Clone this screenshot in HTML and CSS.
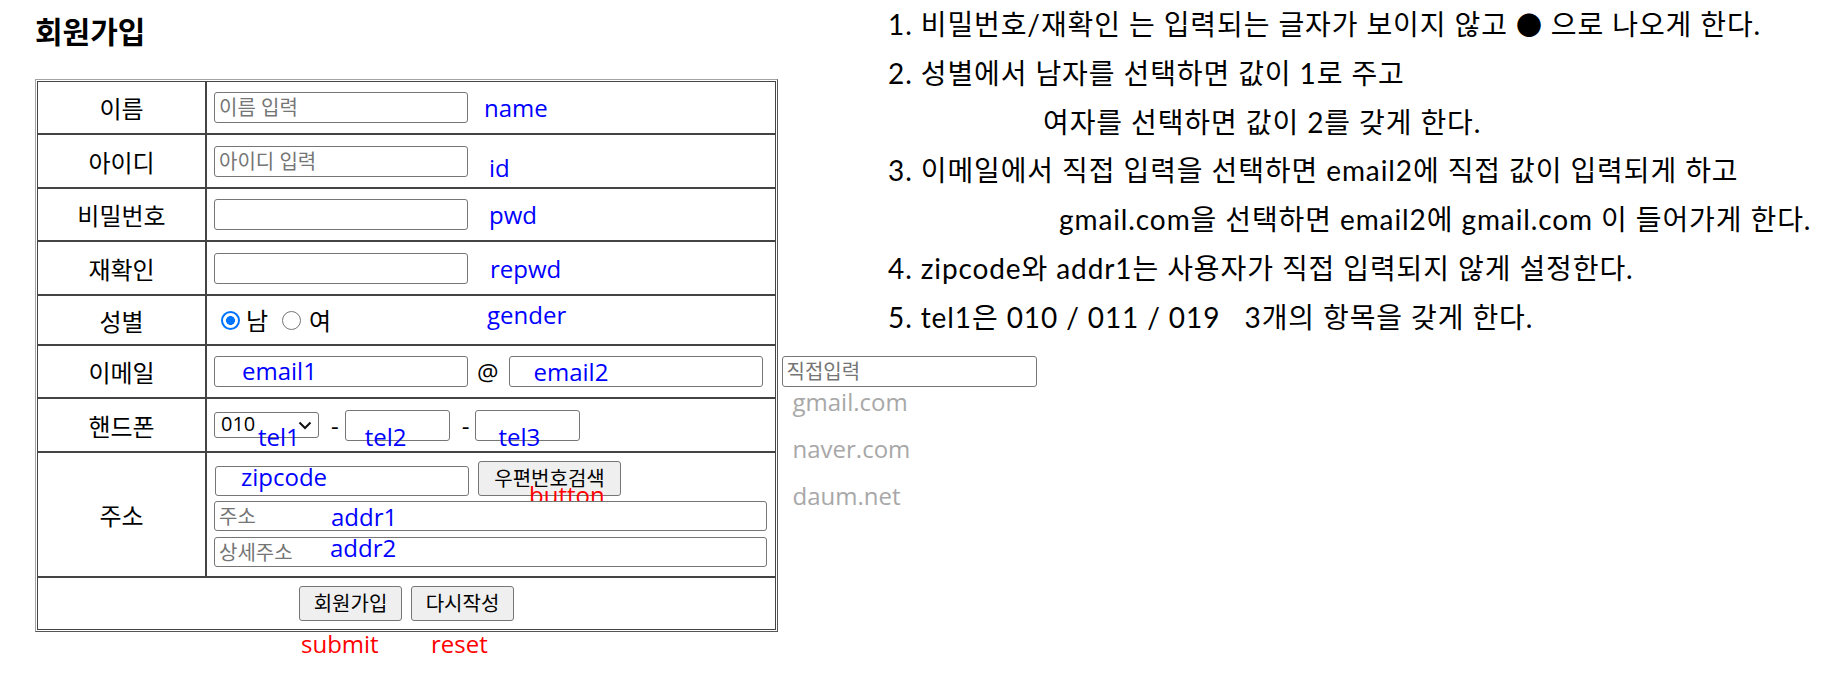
FILE: index.html
```html
<!DOCTYPE html>
<html lang="ko">
<head>
<meta charset="utf-8">
<title>회원가입</title>
<link rel="stylesheet" href="styles.css">
</head>
<body>
<div class="page">
  <section class="form-col">
    <h3 class="title">회원가입</h3>
    <table class="join">
      <tr>
        <td class="lab">이름</td>
        <td><div class="cell h51"><input class="txt" type="text" placeholder="이름 입력"><span class="note n-name">name</span></div></td>
      </tr>
      <tr>
        <td class="lab">아이디</td>
        <td><div class="cell h52"><input class="txt" type="text" placeholder="아이디 입력"><span class="note n-id">id</span></div></td>
      </tr>
      <tr>
        <td class="lab">비밀번호</td>
        <td><div class="cell h51"><input class="txt" type="password"><span class="note n-pwd">pwd</span></div></td>
      </tr>
      <tr>
        <td class="lab">재확인</td>
        <td><div class="cell h52"><input class="txt" type="password"><span class="note n-repwd">repwd</span></div></td>
      </tr>
      <tr>
        <td class="lab">성별</td>
        <td><div class="cell h48">
          <div class="gbox">
            <input class="radio r1" type="radio" name="gender" value="1" checked><span class="gl">남</span>
            <input class="radio r2" type="radio" name="gender" value="2"><span class="gl">여</span>
          </div>
          <span class="note n-gender">gender</span>
        </div></td>
      </tr>
      <tr>
        <td class="lab">이메일</td>
        <td><div class="cell h51">
          <span class="fld"><input class="txt" type="text"><span class="ov blue ov-email1">email1</span></span>
          <span class="at">@</span>
          <span class="fld"><input class="txt" type="text"><span class="ov blue ov-email2">email2</span></span>
          <span class="fld direct"><input class="txt w255" type="text" placeholder="직접입력">
            <span class="opts"><span class="opt">gmail.com</span><span class="opt">naver.com</span><span class="opt">daum.net</span></span>
          </span>
        </div></td>
      </tr>
      <tr>
        <td class="lab">핸드폰</td>
        <td><div class="cell h52">
          <span class="fld"><select class="sel"><option>010</option><option>011</option><option>019</option></select><svg class="chev" width="14" height="9" viewBox="0 0 14 9"><path d="M1.5 1.5l5.5 5.5 5.5-5.5" fill="none" stroke="#111" stroke-width="2"/></svg><span class="ov blue ov-tel1">tel1</span></span>
          <span class="dash">-</span>
          <span class="fld"><input class="txt w105" type="text"><span class="ov blue ov-tel2">tel2</span></span>
          <span class="dash">-</span>
          <span class="fld"><input class="txt w105" type="text"><span class="ov blue ov-tel3">tel3</span></span>
        </div></td>
      </tr>
      <tr>
        <td class="lab">주소</td>
        <td><div class="cell addr">
          <div class="ziprow">
            <span class="fld"><input class="txt h30" type="text"><span class="ov blue ov-zip">zipcode</span></span>
            <span class="fld"><button class="btn w143" type="button">우편번호검색</button><span class="ov red ov-button">button</span></span>
          </div>
          <span class="fld a1"><input class="txt h30 w553" type="text" placeholder="주소"><span class="ov blue ov-addr">addr1</span></span>
          <span class="fld a2"><input class="txt h30 w553" type="text" placeholder="상세주소"><span class="ov blue ov-addr2">addr2</span></span>
        </div></td>
      </tr>
      <tr>
        <td colspan="2"><div class="cell center h51">
          <span class="fld"><button class="btn w103" type="submit">회원가입</button><span class="ov red ov-submit">submit</span></span>
          <span class="fld"><button class="btn w103" type="reset">다시작성</button><span class="ov red ov-reset">reset</span></span>
        </div></td>
      </tr>
    </table>
  </section>

  <section class="notes">
    <p>1. 비밀번호/재확인 는 입력되는 글자가 보이지 않고 <span class="dot">●</span> 으로 나오게 한다.</p>
    <p>2. 성별에서 남자를 선택하면 값이 1로 주고</p>
    <p class="indent2">여자를 선택하면 값이 2를 갖게 한다.</p>
    <p>3. 이메일에서 직접 입력을 선택하면 email2에 직접 값이 입력되게 하고</p>
    <p class="indent3">gmail.com을 선택하면 email2에 gmail.com 이 들어가게 한다.</p>
    <p>4. zipcode와 addr1는 사용자가 직접 입력되지 않게 설정한다.</p>
    <p>5. tel1은 010 / 011 / 019   3개의 항목을 갖게 한다.</p>
  </section>
</div>
</body>
</html>
```

FILE: styles.css
```css
* { box-sizing: border-box; }

html, body {
  margin: 0;
  padding: 0;
  background: #fff;
}

body {
  width: 1825px;
  height: 678px;
  overflow: hidden;
  font-family: "Open Sans", "Noto Sans CJK KR", sans-serif;
  font-size: 24px;
  color: #000;
}

.page {
  display: flex;
  align-items: flex-start;
}

/* ---------- left: form ---------- */
.form-col {
  flex: none;
  width: 778px;
  padding-left: 35px;
}

.title {
  margin: 12px 0 27px;
  font-size: 30px;
  line-height: 40px;
  font-weight: 700;
}

.join {
  width: 743px;
  table-layout: fixed;
  border-collapse: separate;
  border-spacing: 0;
  border: 1px solid;
  border-color: #a3a3a3 #555 #555 #a3a3a3;
  padding: 1px;
}

.join td {
  border: 1px solid #444;
  padding: 0;
  vertical-align: middle;
}

.join td.lab {
  width: 169px;
  text-align: center;
  font-size: 24px;
}

.cell {
  display: flex;
  align-items: center;
  padding-left: 7px;
  white-space: nowrap;
}

.cell > * { flex: none; }

.h48 { height: 48px; }
.h51 { height: 51px; }
.h52 { height: 52px; }

.cell.center {
  justify-content: center;
  padding-left: 0;
  gap: 9px;
}

.cell.addr {
  height: 123px;
  flex-direction: column;
  align-items: flex-start;
  justify-content: flex-start;
  padding-top: 8px;
}

.ziprow {
  display: flex;
  align-items: flex-end;
  height: 35px;
  padding-left: 1px;
}

.ziprow .fld + .fld { margin-left: 9px; }

.fld.a1 { margin-top: 5px; }
.fld.a2 { margin-top: 6px; }

/* form controls */
.txt {
  flex: none;
  display: block;
  width: 254px;
  height: 31px;
  margin: 0;
  padding: 0 4px;
  border: 1px solid #767676;
  border-radius: 3px;
  background: #fff;
  font-family: "Open Sans", "Noto Sans CJK KR", sans-serif;
  font-size: 20px;
  color: #000;
  outline: none;
}

.txt::placeholder { color: #757575; opacity: 1; }

.w105 { width: 105px; }
.w255 { width: 255px; }
.w553 { width: 553px; }
.h30 { height: 30px; }

.sel {
  display: block;
  width: 105px;
  height: 26px;
  margin: 0;
  padding: 0 0 2px 6px;
  border: 1px solid #767676;
  border-radius: 3px;
  background: #fff;
  -webkit-appearance: none;
  appearance: none;
  font-family: "Open Sans", "Noto Sans CJK KR", sans-serif;
  font-size: 20px;
  line-height: 22px;
  color: #000;
}

.chev {
  position: absolute;
  left: 84px;
  top: 9px;
  display: block;
}

.btn {
  display: block;
  height: 35px;
  margin: 0;
  padding: 0;
  border: 1px solid #767676;
  border-radius: 3px;
  background: #efefef;
  font-family: "Open Sans", "Noto Sans CJK KR", sans-serif;
  font-size: 20px;
  line-height: 33px;
  color: #000;
  text-align: center;
}

.w103 { width: 103px; }
.w143 { width: 143px; }

.gbox {
  width: 254px;
  display: flex;
  align-items: center;
}

.radio {
  -webkit-appearance: none;
  appearance: none;
  flex: none;
  width: 19px;
  height: 19px;
  margin: 0;
  border: 1px solid #767676;
  border-radius: 50%;
  background: #fff;
}

.radio:checked {
  border: 2px solid #0075ff;
  background: radial-gradient(circle closest-side, #0075ff 0 56%, #fff 62%);
}

.r1 { margin: 0 6px 0 7px; }
.r2 { margin: 0 8px 0 14px; }

.gl { font-size: 24px; line-height: 33px; }

.at {
  margin: 0 10px 0 9px;
  font-size: 24px;
  line-height: 33px;
}

.dash {
  margin: 0 6px 0 12px;
  font-size: 24px;
  line-height: 33px;
}

.fld.direct { margin-left: 19px; }

/* annotations */
.note {
  color: #0000ff;
  font-size: 24px;
  line-height: 33px;
}

.n-name { margin-left: 16px; }
.n-id { margin-left: 21px; margin-top: 13px; }
.n-pwd { margin-left: 21px; }
.n-repwd { margin-left: 22px; }
.n-gender { margin-left: 19px; margin-bottom: 12px; }

.fld {
  position: relative;
  display: block;
  flex: none;
}

.ov {
  position: absolute;
  white-space: nowrap;
  font-size: 24px;
  line-height: 33px;
  pointer-events: none;
}

.blue { color: #0000ff; }
.red { color: #ff0000; }

.ov-email1 { left: 28px; top: -2px; }
.ov-email2 { left: 25px; top: -1px; }
.ov-tel1 { left: 44px; top: 8px; }
.ov-tel2 { left: 20px; top: 10px; }
.ov-tel3 { left: 23px; top: 10px; }
.ov-zip { left: 26px; top: -6px; }
.ov-button { left: 51px; top: 17px; }
.ov-addr { left: 117px; top: -1px; }
.ov-addr2 { left: 116px; top: -6px; }
.ov-submit { left: 2px; top: 41px; }
.ov-reset { left: 20px; top: 41px; }

.opts {
  position: absolute;
  left: 11px;
  top: 22px;
  display: flex;
  flex-direction: column;
  color: #a8a8a8;
  font-size: 24px;
  line-height: 47px;
  white-space: nowrap;
}

/* ---------- right: notes ---------- */
.notes {
  flex: none;
  margin-left: 110px;
  font-family: Lato, "Noto Sans CJK KR", sans-serif;
  font-size: 28px;
  line-height: 48.8px;
  letter-spacing: 0.9px;
}

.notes p {
  margin: 0;
  white-space: pre;
}

.notes .dot {
  font-family: "Noto Sans CJK KR", sans-serif;
  font-size: 26px;
}

.indent2 { padding-left: 155px; }
.indent3 { padding-left: 171px; }
```
